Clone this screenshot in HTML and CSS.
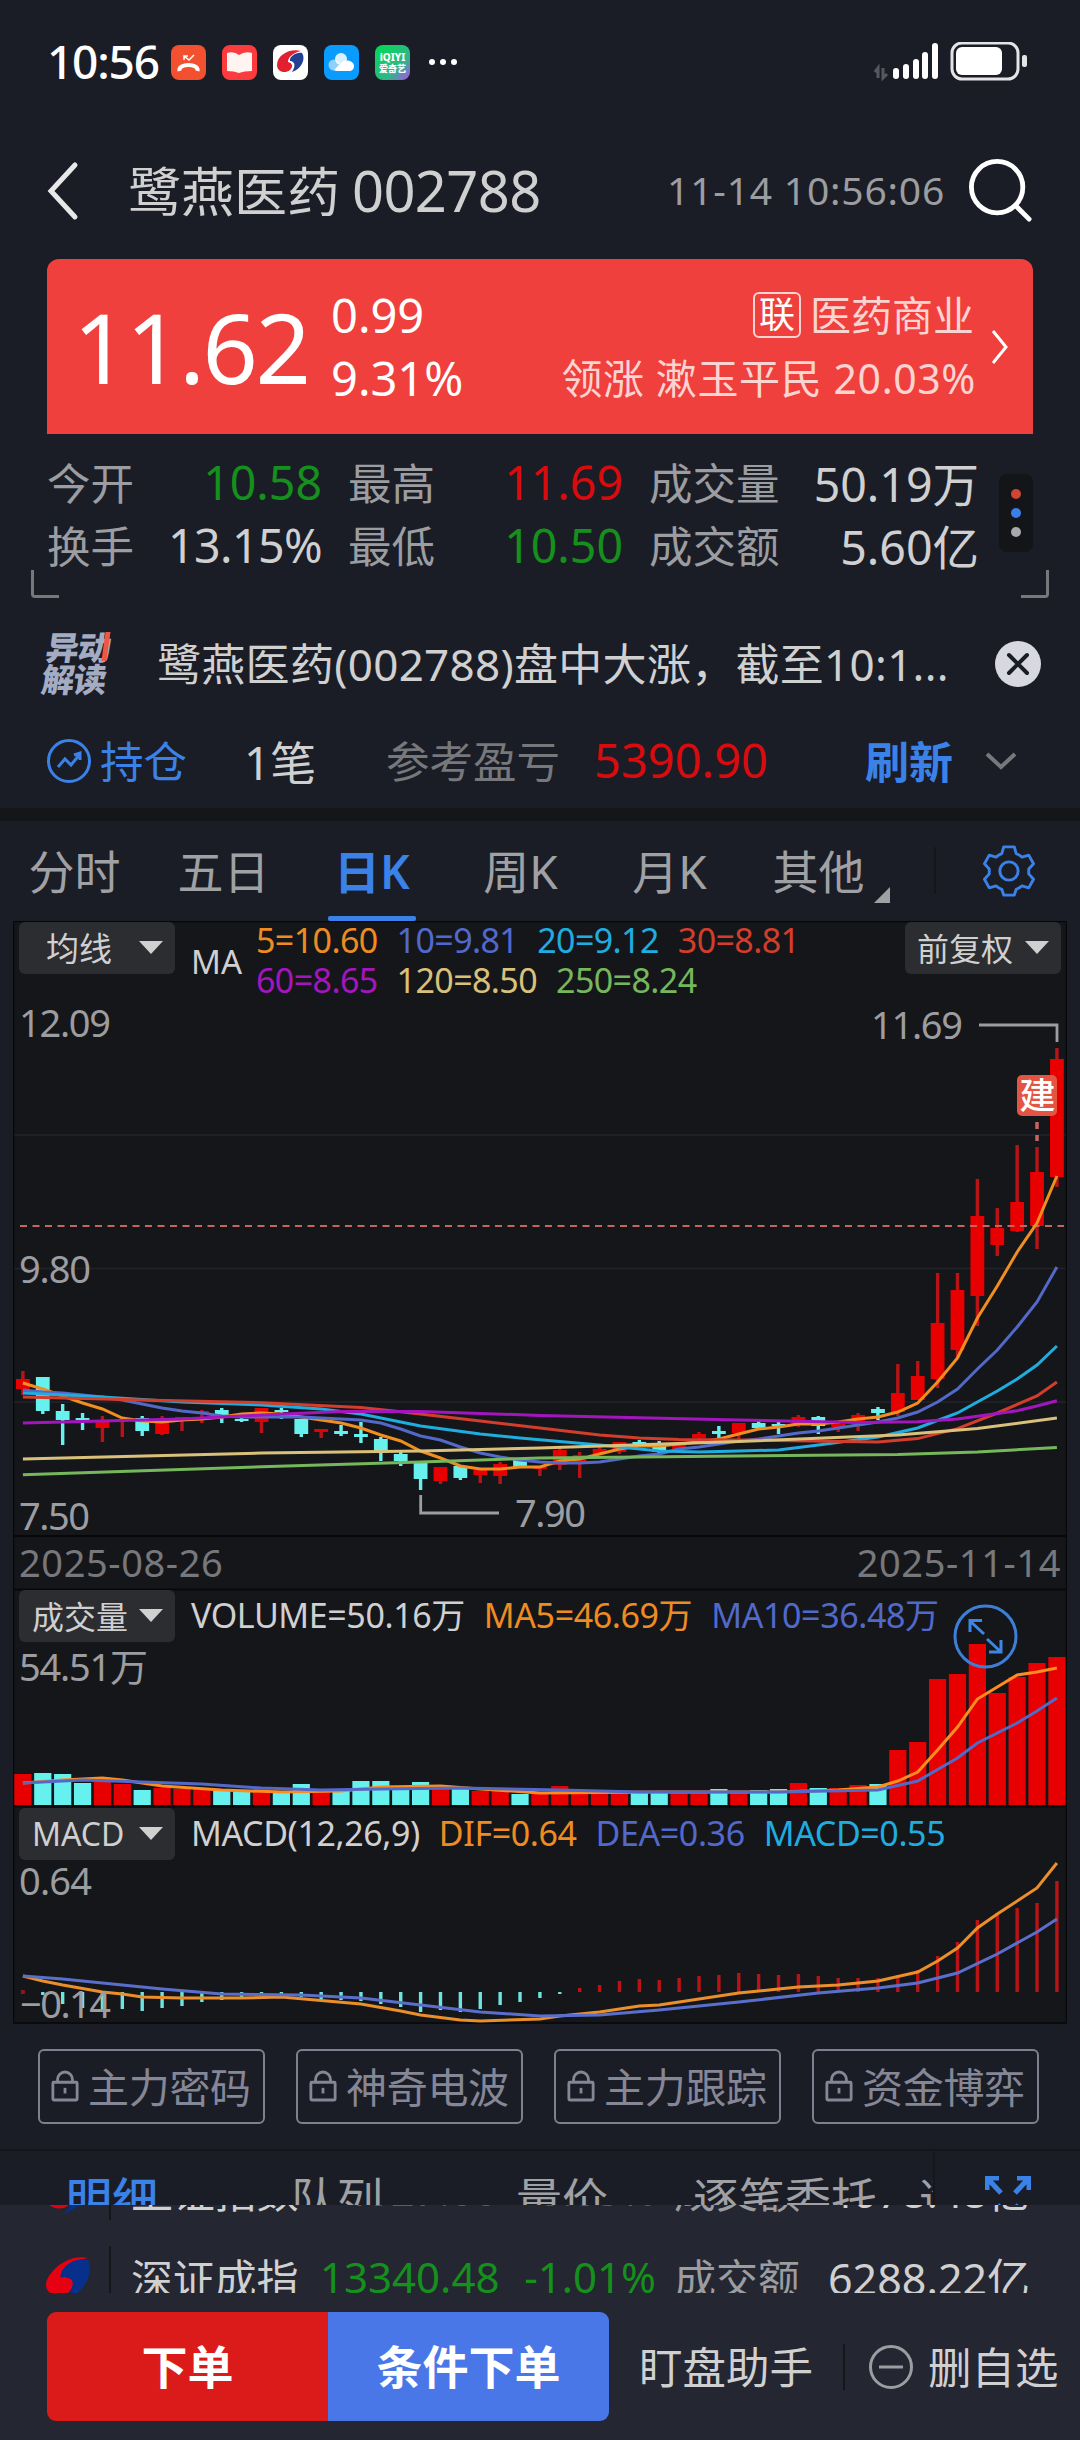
FILE: index.html
```html
<!DOCTYPE html>
<html lang="zh-CN">
<head>
  <meta charset="UTF-8" />
  <meta name="viewport" content="width=device-width, initial-scale=1.0" />
  <title>鹭燕医药 002788</title>
  <link rel="stylesheet" href="styles.css">
</head>
<body>
  <div class="status">
    <span class="clock">10:56</span>
    <svg class="app" viewBox="0 0 35 35"><rect width="35" height="35" rx="8" fill="#f2502f"/><path d="M8.500 26c-2-8 20-8 18 0" fill="none" stroke="#fff" stroke-width="4"/><path d="M13 15v-4h4M13 11l5 4 5-5" fill="none" stroke="#fff" stroke-width="1.5"/></svg>
    <svg class="app" viewBox="0 0 35 35"><rect width="35" height="35" rx="8" fill="#fb3b3e"/><path d="M5 8q7-2 12 2q6-4 13-2v18q-8 0-13 2q-5-2-12-2z" fill="#fff4f0"/></svg>
    <svg class="app" viewBox="0 0 35 35"><rect width="35" height="35" rx="8" fill="#fff"/><path d="M28 6C17 3 4 10 4 20c0 7 8 9 13 5c4-4 2-7-2-8c0-5 5-9 13-11z" fill="#e3202f"/><path d="M29 8c-6-1-13 4-12 8c5 0 6 5 2 11c10-3 14-14 10-19z" fill="#223f92"/></svg>
    <svg class="app" viewBox="0 0 35 35"><rect width="35" height="35" rx="8" fill="#0a9bff"/><circle cx="10" cy="20" r="5.5" fill="#8fd0ff"/><path d="M10 25l7-7c5-5 13-2 13 3c0 3-2 5-5 5H12z" fill="#fff"/><circle cx="17" cy="14" r="6" fill="#fff" opacity=".85"/></svg>
    <svg class="app" viewBox="0 0 35 35">
      <defs><linearGradient id="iq" x1="0" y1="0" x2="1" y2="1"><stop offset="0" stop-color="#00dc50"/><stop offset=".65" stop-color="#2fb589"/><stop offset="1" stop-color="#b34cf0"/></linearGradient></defs>
      <rect width="35" height="35" rx="8" fill="url(#iq)"/>
      <text x="17.5" y="16" class="iq-a">iQIYI</text><text x="17.5" y="27" class="iq-b">爱奇艺</text>
    </svg>
    <svg class="dots" viewBox="0 0 28 8"><circle cx="3" cy="4" r="3"/><circle cx="14" cy="4" r="3"/><circle cx="25" cy="4" r="3"/></svg>
    <svg class="signal" viewBox="0 0 154 42">
      <path d="M4 36V26l-3 4M9 26v10l4-4" stroke="#55585f" stroke-width="3" fill="none"/>
      <g fill="#fff"><rect x="19" y="26" width="6" height="11" rx="3"/><rect x="29" y="22" width="6" height="15" rx="3"/><rect x="39" y="17" width="6" height="20" rx="3"/><rect x="48" y="10" width="6" height="27" rx="3"/><rect x="58" y="1" width="6" height="36" rx="3"/></g>
      <rect x="78" y="1" width="66" height="36" rx="10" fill="none" stroke="#e4e4e6" stroke-width="3"/>
      <rect x="82" y="5" width="46" height="28" rx="6" fill="#fff"/>
      <rect x="148" y="13" width="5" height="12" rx="2" fill="#e4e4e6"/>
    </svg>
  </div>

  <div class="topbar">
    <svg class="back" viewBox="0 0 34 60"><path d="M29 4L5 30l24 26"/></svg>
    <h1>鹭燕医药</h1><span class="code">002788</span>
    <span class="time">11-14 10:56:06</span>
    <svg class="search" viewBox="0 0 66 66"><circle cx="29" cy="29" r="26.5"/><path d="M48 48l14 14"/></svg>
  </div>

  <div class="card">
    <div class="price">11.62</div>
    <div class="change"><span>0.99</span><span>9.31%</span></div>
    <div class="sector">
      <div><span class="tag">联</span>医药商业</div>
      <div class="leader">领涨 漱玉平民 20.03%</div>
    </div>
    <svg class="go" viewBox="0 0 18 34"><path d="M2 1l13 16L2 33"/></svg>
  </div>

  <div class="stats">
    <div class="grid">
      <div><label>今开</label><b class="green">10.58</b></div>
      <div><label>最高</label><b class="red">11.69</b></div>
      <div><label>成交量</label><b>50.19万</b></div>
      <div><label>换手</label><b class="pct">13.15%</b></div>
      <div><label>最低</label><b class="green">10.50</b></div>
      <div><label>成交额</label><b>5.60亿</b></div>
    </div>
    <div class="pill"><i class="d1"></i><i class="d2"></i><i class="d3"></i></div>
  </div>
  <div class="corners"><i></i><i></i></div>

  <div class="news">
    <div class="badge"><span>异动</span><span>解读</span><i></i></div>
    <p>鹭燕医药(002788)盘中大涨，截至10:1...</p>
    <svg class="close" viewBox="0 0 46 46"><circle cx="23" cy="23" r="23" fill="#d8d9e0"/><path d="M14 14l18 18M32 14L14 32" stroke="#1b1d26" stroke-width="4" stroke-linecap="round"/></svg>
  </div>

  <div class="hold">
    <svg class="trend" viewBox="0 0 44 44"><circle cx="22" cy="22" r="20.5"/><path d="M11 28l7-8 6 6 9-11M27 16l6-2 0 7"/></svg>
    <span class="blue">持仓</span>
    <span class="count">1笔</span>
    <span class="pl">参考盈亏</span>
    <span class="red amount">5390.90</span>
    <span class="blue refresh">刷新</span>
    <svg class="down" viewBox="0 0 32 18"><path d="M2 2l14 13L30 2"/></svg>
  </div>

  <div class="tabs">
    <span>分时</span><span>五日</span><span class="active">日K</span><span>周K</span><span>月K</span><span class="more">其他</span>
    <i class="split"></i>
    <svg class="gear" viewBox="0 0 54 54"><path d="M21.500 2h11l2 7q3 1 6 3.500l7-2 5 9-5 5.500v5l5 5.500-5 9-7-2q-3 2.500-6 3.500l-2 6h-11l-2-6q-3-1-6-3.500l-7 2-5-9 5-5.500v-5l-5-5.500 5-9 7 2q3-2.500 6-3.500z"/><circle cx="27" cy="27" r="9.500"/></svg>
  </div>

  <div class="charts">
    <svg id="plot" viewBox="13 921 1054 1103"></svg>
    <div class="panel kline">
      <span class="select">均线</span>
      <span class="ma">MA</span>
      <div class="ma-list">
        <div><span class="c5">5=10.60</span><span class="c10">10=9.81</span><span class="c20">20=9.12</span><span class="c30">30=8.81</span></div>
        <div><span class="c60">60=8.65</span><span class="c120">120=8.50</span><span class="c250">250=8.24</span></div>
      </div>
      <span class="select right">前复权</span>
    </div>
    <div class="panel dates"><span>2025-08-26</span><span>2025-11-14</span></div>
    <div class="panel volume">
      <span class="select">成交量</span>
      <div class="legend"><span>VOLUME=50.16万</span><span class="c5">MA5=46.69万</span><span class="c10">MA10=36.48万</span></div>
    </div>
    <div class="panel macd">
      <span class="select">MACD</span>
      <div class="legend"><span>MACD(12,26,9)</span><span class="c5">DIF=0.64</span><span class="c10">DEA=0.36</span><span class="c20">MACD=0.55</span></div>
    </div>
  </div>

  <div class="locks">
    <div><svg viewBox="0 0 30 34"><path d="M7 13V10a8 8 0 0 1 16 0v3"/><rect x="2" y="13" width="26" height="19" rx="1"/><path d="M15 19v6"/></svg>主力密码</div>
    <div><svg viewBox="0 0 30 34"><path d="M7 13V10a8 8 0 0 1 16 0v3"/><rect x="2" y="13" width="26" height="19" rx="1"/><path d="M15 19v6"/></svg>神奇电波</div>
    <div><svg viewBox="0 0 30 34"><path d="M7 13V10a8 8 0 0 1 16 0v3"/><rect x="2" y="13" width="26" height="19" rx="1"/><path d="M15 19v6"/></svg>主力跟踪</div>
    <div><svg viewBox="0 0 30 34"><path d="M7 13V10a8 8 0 0 1 16 0v3"/><rect x="2" y="13" width="26" height="19" rx="1"/><path d="M15 19v6"/></svg>资金博弈</div>
  </div>

  <div class="detail">
    <div class="detail-tabs"><span class="active">明细</span><span>队列</span><span>量价</span><span>逐笔委托</span><span>逐</span></div>
    <svg class="expand" viewBox="0 0 46 46"><path d="M16 17L3 3M2 14V2h12M30 17L43 3M44 14V2H32M16 29L3 43M30 29l13 14"/></svg>
  </div>

  <div class="footer">
    <div class="ticker">
      <div class="index">
        <svg viewBox="0 0 45 45"><path d="M42 2C20-3 0 18 0 29c0 10 15 14 23 7c6-6 6-14-2-14c-6-6 6-18 21-20z" fill="#e50012"/><path d="M42 4C27 0 12 14 15 22c8-3 14 2 11 9q-1 8-9 14C36 40 49 18 42 4z" fill="#06308c"/></svg>
        <span class="name">上证指数</span><span class="green point">4027.00</span><span class="green rate">-0.05%</span><span class="lbl">成交额</span><span class="sum">4078.48亿</span>
      </div>
      <div class="index">
        <svg viewBox="0 0 45 45"><path d="M42 2C20-3 0 18 0 29c0 10 15 14 23 7c6-6 6-14-2-14c-6-6 6-18 21-20z" fill="#e50012"/><path d="M42 4C27 0 12 14 15 22c8-3 14 2 11 9q-1 8-9 14C36 40 49 18 42 4z" fill="#06308c"/></svg>
        <span class="name">深证成指</span><span class="green point">13340.48</span><span class="green rate">-1.01%</span><span class="lbl">成交额</span><span class="sum">6288.22亿</span>
      </div>
    </div>
    <div class="actions">
      <button class="buy">下单</button><button class="cond">条件下单</button>
      <span class="watch">盯盘助手</span>
      <svg class="minus" viewBox="0 0 44 44"><circle cx="22" cy="22" r="20.5"/><path d="M10 22h24"/></svg>
      <span class="remove">删自选</span>
    </div>
  </div>
  <script src="chart.js"></script>
</body>
</html>
```
FILE: styles.css
```css
* {
  box-sizing: border-box;
}
body {
  margin: 0;
  width: 1080px;
  height: 2440px;
  overflow: hidden;
  background: #1b1d26;
  color: #d0d0d1;
  font-family: "Noto Sans", "Noto Sans CJK SC", sans-serif;
  white-space: nowrap;
}
svg {
  display: block;
  flex: none;
}
.green { color: #16901c; }
.red { color: #d80b0e; }
.blue { color: #3a82e8; }
.c5 { color: #ee8c22; }
.c10 { color: #5269cc; }
.c20 { color: #1fade0; }
.c30 { color: #d23e2b; }
.c60 { color: #a416bd; }
.c120 { color: #d9c17b; }
.c250 { color: #77b75c; }

.status {
  display: flex;
  align-items: center;
  height: 123px;
  padding-left: 47px;
}
.clock {
  width: 124px;
  font-size: 46px;
  font-weight: 500;
  letter-spacing: -1.2px;
  line-height: 62px;
  padding-bottom: 2px;
  color: #fff;
}
.app {
  width: 35px;
  height: 35px;
  margin-top: 2px;
  margin-right: 16px;
}
.iq-a, .iq-b {
  font-size: 9px;
  font-weight: 800;
  text-anchor: middle;
  fill: #fff;
}
.iq-a {
  font-size: 10px;
}
.dots {
  width: 28px;
  margin-left: 3px;
  fill: #fff;
}
.signal {
  width: 154px;
  margin-left: auto;
  margin-right: 52px;
  margin-top: 2px;
}

.topbar {
  display: flex;
  align-items: center;
  height: 136px;
  padding: 0 47px 0 46px;
}
.back {
  width: 34px;
  height: 60px;
  fill: none;
  stroke: #e8e8e8;
  stroke-width: 5;
  stroke-linecap: round;
}
.topbar h1 {
  margin: -3px 12px 0 48px;
  font-size: 53px;
  font-weight: 400;
}
.code {
  margin-top: -3px;
  font-size: 56px;
  letter-spacing: -.6px;
}
.time {
  margin-left: auto;
  margin-top: -3px;
  margin-right: 24px;
  font-size: 39px;
  letter-spacing: .8px;
  color: #9c9da0;
}
.search {
  width: 64px;
  fill: none;
  stroke: #fff;
  stroke-width: 5;
  stroke-linecap: round;
}

.card {
  display: flex;
  align-items: center;
  height: 175px;
  margin: 0 47px;
  padding-left: 26px;
  background: #ef403d;
  border-radius: 12px 12px 0 0;
  color: #fff;
}
.price {
  width: 258px;
  font-size: 97px;
  font-weight: 400;
  letter-spacing: -2.5px;
  line-height: 120px;
  padding-bottom: 1px;
}
.change {
  display: flex;
  flex-direction: column;
  font-size: 47px;
  line-height: 63px;
  padding-top: 1px;
}
.sector {
  margin-left: auto;
  font-size: 41px;
  line-height: 63px;
  text-align: right;
  color: #fbd3d1;
}
.sector div {
  display: flex;
  align-items: center;
  justify-content: flex-end;
  height: 63px;
}
.sector .leader {
  letter-spacing: .6px;
  margin-right: -2px;
}
.tag {
  width: 48px;
  height: 46px;
  margin-right: 9px;
  border: 2px solid #fbd3d1;
  border-radius: 6px;
  font-size: 36px;
  line-height: 41px;
  text-align: center;
  color: #fff;
}
.go {
  width: 18px;
  margin: 0 24px 0 17px;
  fill: none;
  stroke: #fff;
  stroke-width: 3;
}

.stats {
  display: flex;
  height: 136px;
  padding: 16px 47px 0;
}
.grid {
  display: grid;
  grid-template-columns: 275px 275px 330px;
  grid-auto-rows: 63px;
  column-gap: 26px;
}
.grid div {
  display: flex;
  align-items: center;
  justify-content: space-between;
}
.grid label {
  font-size: 43.5px;
  color: #9c9da0;
}
.grid b {
  font-size: 46.5px;
  font-weight: 400;
}
.grid .pct {
  letter-spacing: -.6px;
}
.pill {
  display: flex;
  flex-direction: column;
  align-items: center;
  justify-content: center;
  gap: 9px;
  width: 35px;
  height: 78px;
  margin: 24px 0 0 20px;
  border-radius: 8px;
  background: #141518;
}
.pill i {
  width: 10px;
  height: 10px;
  border-radius: 50%;
}
.d1 { background: #cf4634; }
.d2 { background: #3a7fe8; }
.d3 { background: #a9a9ac; }
.corners {
  display: flex;
  justify-content: space-between;
  margin: 0 31px;
}
.corners i {
  width: 28px;
  height: 28px;
  border: solid #77787c;
  border-width: 0 0 3px 3px;
  border-radius: 0 0 0 4px;
}
.corners i + i {
  border-width: 0 3px 3px 0;
  border-radius: 0 0 4px 0;
}

.news {
  display: flex;
  align-items: center;
  height: 116px;
  margin-top: 8px;
  padding: 0 39px 0 44px;
}
.badge {
  position: relative;
  display: flex;
  flex-direction: column;
  width: 113px;
  font-size: 33px;
  font-weight: 900;
  line-height: 32px;
  letter-spacing: -1px;
  color: #a3acc3;
  transform: skewX(-8deg);
}
.badge i {
  position: absolute;
  left: 57px;
  top: 0;
  width: 5px;
  height: 29px;
  background: #ee5546;
}
.news p {
  margin: -4px 0 0;
  font-size: 44px;
  letter-spacing: .3px;
}
.close {
  width: 46px;
  margin-left: auto;
}

.hold {
  display: flex;
  align-items: center;
  height: 95px;
  margin-top: -9px;
  padding-left: 47px;
  font-size: 43.5px;
}
.hold span {
  margin-top: -2px;
}
.trend {
  width: 44px;
  margin-right: 9px;
  fill: none;
  stroke: #3a82e8;
  stroke-width: 3;
}
.hold .count {
  width: 142px;
  margin-left: 57px;
  font-size: 46px;
}
.pl {
  width: 208px;
  color: #77787b;
}
.amount {
  width: 271px;
  font-size: 47px;
}
.refresh {
  width: 120px;
  font-size: 44px;
  font-weight: 600;
}
.down {
  width: 32px;
  fill: none;
  stroke: #77787b;
  stroke-width: 4;
}

.tabs {
  display: flex;
  height: 113px;
  border-top: 13px solid #15161a;
  font-size: 46px;
  line-height: 100px;
  color: #a0a1a4;
}
.tabs span {
  width: 149px;
  text-align: center;
}
.tabs .active {
  width: 148px;
  font-weight: 600;
  color: #3a82e8;
}
.tabs .active::after {
  content: "";
  display: block;
  width: 88px;
  height: 5px;
  margin: -5px auto 0;
  border-radius: 2px;
  background: #3a82e8;
}
.tabs .more {
  position: relative;
}
.tabs .more::after {
  content: "";
  position: absolute;
  left: 130px;
  top: 66px;
  border: 8px solid #a0a1a4;
  border-top-color: transparent;
  border-left-color: transparent;
}
.split {
  width: 2px;
  height: 47px;
  margin: 26px 0 0 41px;
  background: #15161a;
}
.gear {
  width: 52px;
  height: 52px;
  margin: 24px 45px 0 auto;
  fill: none;
  stroke: #3a82e8;
  stroke-width: 3;
  stroke-linejoin: round;
}

.charts {
  position: relative;
  margin: 0 13px;
  height: 1103px;
  background: #15161a;
}
#plot {
  position: absolute;
  inset: 0;
  width: 1054px;
  height: 1103px;
}
#plot .axis {
  font-size: 38px;
  fill: #9c9da0;
}
.panel {
  position: relative;
  display: flex;
  align-items: flex-start;
  padding: 1px 6px 0;
}
.kline { height: 615px; }
.dates {
  height: 53px;
  justify-content: space-between;
  align-items: center;
  font-size: 38px;
  letter-spacing: .6px;
  color: #77787b;
}
.dates span {
  margin-top: -2px;
}
.volume { height: 218px; }
.macd { height: 216px; }
.select {
  display: flex;
  align-items: center;
  justify-content: space-between;
  width: 156px;
  height: 52px;
  padding: 0 12px 2px 13px;
  border-radius: 6px;
  background: #2c2d31;
  font-size: 32px;
}
.kline .select:first-child {
  padding-left: 27px;
  font-size: 33px;
}
.select.right {
  padding-left: 12px;
  margin-left: auto;
}
.select::after {
  content: "";
  border: 12px solid transparent;
  border-top: 13px solid #d0d0d1;
  border-bottom: 0;
}
.ma {
  width: 65px;
  margin: 17px 0 0 16px;
  font-size: 33px;
}
.ma-list {
  margin-top: -2px;
  font-size: 34px;
  line-height: 40px;
  letter-spacing: -.6px;
}
.ma-list div {
  display: flex;
  gap: 19px;
}
.legend {
  display: flex;
  gap: 19px;
  margin-left: 16px;
  font-size: 34px;
  line-height: 50px;
  letter-spacing: -.4px;
}

.locks {
  display: flex;
  justify-content: space-between;
  margin: 25px 41px 0 38px;
}
.locks div {
  display: flex;
  align-items: center;
  width: 227px;
  height: 75px;
  padding: 0 0 4px 11px;
  border: 2px solid #7e8090;
  border-radius: 6px;
  font-size: 41px;
  letter-spacing: -.3px;
  color: #858696;
}
.locks svg {
  width: 28px;
  height: 34px;
  margin-right: 9px;
  margin-top: 3px;
  fill: none;
  stroke: #858696;
  stroke-width: 3;
}

.detail {
  display: flex;
  height: 56px;
  margin-top: 25px;
  border-top: 2px solid #15161a;
  overflow: hidden;
}
.detail-tabs {
  display: flex;
  width: 935px;
  padding-left: 66px;
  overflow: hidden;
  font-size: 46px;
  line-height: 94px;
  color: #a0a1a4;
  border-right: 2px solid #15161a;
}
.detail-tabs span { flex: none; }
.detail-tabs .active {
  font-weight: 500;
  color: #3a82e8;
}
.detail-tabs span:nth-child(1) { width: 225px; }
.detail-tabs span:nth-child(2) { width: 225px; }
.detail-tabs span:nth-child(3) { width: 177px; }
.detail-tabs span:nth-child(4) { width: 226px; }
.expand {
  width: 46px;
  height: 46px;
  margin: 25px 0 0 50px;
  fill: none;
  stroke: #3a82e8;
  stroke-width: 5;
}

.footer {
  height: 235px;
  background: #242631;
}
.ticker {
  height: 88px;
  overflow: hidden;
}
.index {
  display: flex;
  align-items: center;
  height: 87px;
  padding-left: 46px;
  font-size: 42px;
}
.index:first-child {
  margin-top: -59px;
}
.index svg {
  width: 45px;
  height: 45px;
  margin-top: 3px;
  margin-right: 18px;
}
.index .name {
  width: 211px;
  padding-left: 20px;
  border-left: 2px solid #15161a;
  letter-spacing: -.2px;
}
.index .point {
  width: 178px;
  text-align: right;
}
.index .rate {
  width: 158px;
  text-align: right;
}
.index .lbl {
  width: 154px;
  margin-left: 18px;
  color: #9c9da0;
}
.index .sum {
  width: 203px;
  overflow: hidden;
  font-size: 43px;
}
.actions {
  display: flex;
  align-items: center;
  height: 147px;
  padding-left: 47px;
  font-size: 43.5px;
}
.actions button {
  width: 281px;
  height: 109px;
  margin: 0;
  padding: 0 0 5px;
  border: 0;
  color: #fff;
  font-family: inherit;
  font-size: 46px;
  font-weight: 600;
}
.actions .buy {
  background: #db1b1a;
  border-radius: 9px 0 0 9px;
}
.actions .cond {
  background: #4a77e8;
  border-radius: 0 9px 9px 0;
}
.watch {
  width: 236px;
  padding-left: 30px;
  line-height: 46px;
  border-right: 2px solid #15161a;
}
.remove {
  margin-top: -2px;
}
.minus {
  width: 44px;
  margin: 0 15px 0 24px;
  fill: none;
  stroke: #9c9da0;
  stroke-width: 3;
}
```
FILE: chart.js
```js
const plot = document.getElementById("plot");
const X0 = 22.9, STEP = 19.885;
const RED = "#e80000", CYAN = "#67f1ee";
const colors = { ma5: "#f08e20", ma10: "#5269c8", ma20: "#1fade0", ma30: "#d23e2b", ma60: "#a416bd", ma120: "#d9c17b", ma250: "#77b75c" };

// R = up, C = down
const dirs = "RCCCRRCRRRCCRCCRCCCCCRCRRCRRRRRCCRRCRCCRCRRCRRRRRRRRR";

// body top, body bottom, high, low
const candles = [
  [1379,1389,1371,1395],[1377,1411,1377,1414],[1411,1420,1404,1445],[1418,1420,1413,1430],[1421,1428,1416,1442],
  [1419,1421,1419,1437],[1418,1431,1416,1436],[1419,1434,1416,1435],[1417,1419,1417,1431],[1411,1414,1410,1423],
  [1410,1416,1408,1423],[1419,1421,1413,1422],[1408,1422,1408,1433],[1410,1412,1408,1419],[1419,1434,1419,1437],
  [1429,1432,1429,1438],[1431,1434,1425,1436],[1434,1437,1422,1443],[1439,1453,1437,1461],[1454,1461,1451,1466],
  [1463,1479,1463,1490],[1467,1481,1467,1484],[1466,1478,1466,1480],[1470,1475,1470,1483],[1464,1476,1462,1484],
  [1460,1467,1460,1467],[1467,1469,1466,1476],[1450,1465,1448,1470],[1455,1464,1452,1478],[1449,1454,1447,1454],
  [1442,1452,1442,1454],[1442,1444,1440,1447],[1446,1452,1441,1454],[1443,1449,1443,1449],[1434,1438,1432,1439],
  [1431,1434,1426,1438],[1423,1433,1423,1439],[1423,1428,1421,1429],[1424,1426,1421,1434],[1417,1425,1415,1427],
  [1417,1426,1416,1434],[1424,1427,1423,1432],[1415,1422,1413,1431],[1409,1413,1407,1420],[1393,1412,1364,1416],
  [1376,1400,1361,1400],[1323,1379,1273,1388],[1290,1350,1273,1357],[1216,1296,1179,1326],[1228,1245,1208,1256],
  [1202,1231,1145,1232],[1172,1226,1147,1249],[1059,1177,1048,1187]
];
const volumes = [1774,1773,1774,1783,1782,1784,1790,1788,1789,1789,1791,1792,1787,1791,1784,1792,1791,1781,1781,1789,1782,1789,1789,1791,1791,1794,1793,
  1786,1792,1793,1793,1793,1793,1791,1793,1789,1793,1790,1789,1783,1788,1788,1785,1784,1750,1742,1679,1674,1644,1693,1677,1663,1657];
const macd = [1990,1995,2004,2008,2009,2009,2011,2008,2006,2002,2000,1998,1994,1994,1997,1999,2000,2001,2004,2007,2012,2010,2012,2009,2005,2002,1998,
  1994,1988,1985,1981,1979,1980,1978,1976,1975,1973,1974,1975,1974,1976,1978,1978,1978,1975,1970,1956,1942,1920,1913,1908,1903,1881];

const ma5 = [1383,1389,1396,1403,1409,1418,1421,1422,1420,1419,1417,1414,1413,1414,1417,1420,1423,1428,1435,1441,1451,1458,1466,1469,1469,1467,
  1467,1461,1459,1454,1449,1446,1446,1444,1442,1439,1434,1429,1427,1424,1424,1422,1419,1417,1412,1403,1382,1358,1318,1286,1252,1223,1176].map((y, i) => [i, y]);
const ma10 = [1390,1392,1393,1395,1397,1400,1404,1408,1411,1413,1416,1417,1417,1417,1417,1418,1419,1420,1423,1429,1436,1440,1447,1453,1457,1460,
  1462,1463,1463,1462,1459,1456,1454,1449,1447,1444,1441,1439,1436,1433,1431,1428,1425,1422,1418,1412,1402,1389,1369,1350,1327,1302,1267].map((y, i) => [i, y]);
const ma20 = [[0,1393],[4,1397],[8,1402],[12,1405],[15,1409],[17,1414],[19,1422],[20,1426],[23,1434],[25,1438],[29,1445],[32,1451],[34,1452],[36,1451],[38,1450],[40,1445],[43,1437],[45,1428],[47,1413],[48,1402],[49,1391],[50,1379],[51,1365],[52,1346]];
const ma30 = [[0,1397],[6,1400],[12,1402.7],[17,1407.5],[19,1411.7],[23,1421],[26,1428],[29,1435],[31,1438],[33,1439.6],[36,1440],[43,1442],[45,1438.6],[47,1428.6],[49,1413],[51,1396],[52,1382]];
const ma60 = [[0,1423],[8,1419],[12,1415],[16,1411.5],[20,1411.5],[26,1415.4],[36,1420],[42,1422.5],[45,1421.8],[47,1419],[50,1410.7],[51,1406],[52,1400.7]];
const ma120 = [[0,1459],[12,1453],[20,1451],[26,1448],[36,1441.5],[44,1435],[48,1428.6],[52,1418]];
const ma250 = [[0,1474.7],[12,1466.7],[20,1462],[26,1458],[36,1456],[44,1454.6],[48,1452],[52,1447.5]];
const vol5 = [[0,1783],[2,1780],[4,1778],[5,1780],[7,1786],[10,1790],[13,1792],[16,1791],[18,1787],[21,1786],[23,1789],[26,1793],[32,1792],[38,1792],[41,1790],[43,1787],[44,1781],[45,1772],[46,1750],[47,1727],[48,1699],[49,1687],[50,1675],[51,1672],[52,1668]];
const vol10 = [[0,1783],[3,1780],[6,1782],[9,1784],[12,1788],[15,1790],[18,1789],[22,1788],[27,1790],[31,1792],[38,1792],[43,1790],[45,1781],[47,1758],[48,1743],[50,1723],[51,1711],[52,1698]];
const dif = [[0,1976],[1,1981],[2,1985],[4,1992],[5,1994],[6,1997],[8,1998],[11,1998],[13,1997],[17,2004],[19,2011],[20,2015],[22,2020],[23,2021],[26,2019],[27,2016],[29,2012],[31,2006],[32,2005],[34,1999],[36,1993],[38,1989],[39,1987],[41,1985],[43,1981],[45,1972],[46,1961],[47,1948],[48,1928],[49,1914],[51,1888],[52,1863]];
const dea = [[0,1976],[2,1979],[7,1989],[10,1994],[14,1995],[17,1998],[20,2005],[23,2012],[26,2016],[29,2015],[32,2010],[36,2002],[40,1993],[43,1988],[45,1983],[47,1973],[49,1954],[51,1932],[52,1919]];

let out = "";
const cx = i => X0 + i * STEP;
const rect = (x, y, w, h, fill) => { out += `<rect x="${x}" y="${y}" width="${w}" height="${h}" fill="${fill}"/>`; };
const path = (d, stroke, w, extra = "") => { out += `<path d="${d}" fill="none" stroke="${stroke}" stroke-width="${w}" ${extra}/>`; };
const line = (pts, stroke) => path("M" + pts.map(p => cx(p[0]).toFixed(1) + " " + p[1]).join("L"), stroke, 3);
const label = (x, y, w, text) => { out += `<text class="axis" x="${x}" y="${y}" textLength="${w}">${text}</text>`; };

// grid and frames
[1135, 1268.5, 1402].forEach(y => path(`M14 ${y}H1066`, "#22242a", 1.5));
[1536, 1589.5, 1806.5].forEach(y => path(`M13 ${y}H1067`, "#07080a", 2));
path("M13.500 921.500H1066.500V2023H13.500Z", "#07080a", 1.5);

label(19, 1037, 92, "12.09");
label(19, 1283, 72, "9.80");
label(19, 1530, 71, "7.50");
label(871, 1039, 92, "11.69");
label(515, 1527, 71, "7.90");
label(19, 1681, 129, "54.51万");
label(19, 1895, 73, "0.64");

candles.forEach((c, i) => {
  const color = dirs[i] === "R" ? RED : CYAN;
  rect(cx(i) - 1.7, c[2], 3.4, c[3] - c[2], dirs[i] === "R" ? "#b81416" : color);
  rect(cx(i) - 6.9, c[0], 13.8, c[1] - c[0], color);
});
path("M20 1226H1064", "#c4665f", 1.8, 'stroke-dasharray="7 5.5"');
line(ma5, colors.ma5);
line(ma10, colors.ma10);
line(ma20, colors.ma20);
line(ma30, colors.ma30);
line(ma60, colors.ma60);
line(ma120, colors.ma120);
line(ma250, colors.ma250);

// high / low callouts
path("M979 1025H1057V1042", "#9c9da0", 2.8);
path("M420.700 1495V1513H499", "#9c9da0", 2.8);

// buy mark
out += `<rect x="1017" y="1075" width="40" height="41" rx="5" fill="#e35442"/>`;
out += `<text x="1037.500" y="1109" font-size="36" font-weight="500" fill="#fff" text-anchor="middle">建</text>`;
path("M1037 1122V1129M1037 1135V1141", "#c4665f", 3.5);

volumes.forEach((y, i) => rect(cx(i) - 8.6, y, 17.2, 1805 - y, dirs[i] === "R" ? RED : CYAN));
line(vol5, "#ff8c1e");
line(vol10, colors.ma10);

out += `<circle cx="985.500" cy="1636.500" r="30.500" fill="none" stroke="#3d7fd6" stroke-width="3"/>`;
path("M984 1634L970 1621M970 1632V1620.500H982M987 1639L1001 1652M1001 1640V1652H989", "#3d86e6", 3);

macd.forEach((y, i) => {
  if (i === 0) rect(cx(i) - 2, 1990, 4, 4, "#8c1618");
  else if (y > 1992) rect(cx(i) - 1.7, 1992, 3.4, y - 1992, "#6fe3e0");
  else rect(cx(i) - 1.7, y, 3.4, 1992 - y, "#b81416");
});
line(dif, "#ea8f2a");
line(dea, "#5a6fcc");
label(20, 2018, 91, "−0.14");

plot.innerHTML = out;
```
